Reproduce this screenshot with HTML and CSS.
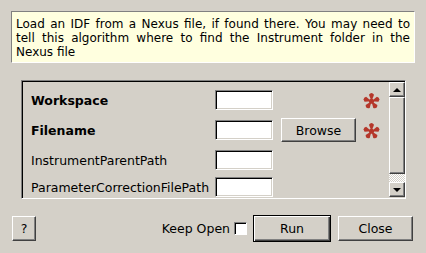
FILE: index.html
```html
<!DOCTYPE html>
<html lang="en">
<head>
  <meta charset="UTF-8">
  <title>LoadIDFFromNexus</title>
  <link rel="stylesheet" href="styles.css">
</head>
<body>
  <div class="dialog">
    <div class="description">Load an IDF from a Nexus file, if found there. You may need to tell this algorithm where to find the Instrument folder in the Nexus file</div>

    <div class="panel">
      <div class="props">
        <div class="row">
          <span class="name bold">Workspace</span>
          <span class="field"></span>
          <span class="browse-slot"></span>
          <svg class="req" viewBox="0 0 16 16" aria-label="required">
            <circle cx="8" cy="8.7" r="2.4"/>
            <path d="M8 8.7 L5.6 2.6 Q8 -0.6 10.4 2.6 Z"/>
            <path d="M8 8.7 L5.6 2.6 Q8 -0.6 10.4 2.6 Z" transform="rotate(72 8 8.7)"/>
            <path d="M8 8.7 L5.6 2.6 Q8 -0.6 10.4 2.6 Z" transform="rotate(144 8 8.7)"/>
            <path d="M8 8.7 L5.6 2.6 Q8 -0.6 10.4 2.6 Z" transform="rotate(216 8 8.7)"/>
            <path d="M8 8.7 L5.6 2.6 Q8 -0.6 10.4 2.6 Z" transform="rotate(288 8 8.7)"/>
          </svg>
        </div>
        <div class="row">
          <span class="name bold">Filename</span>
          <span class="field"></span>
          <span class="browse-slot"><button class="btn browse">Browse</button></span>
          <svg class="req" viewBox="0 0 16 16" aria-label="required">
            <circle cx="8" cy="8.7" r="2.4"/>
            <path d="M8 8.7 L5.6 2.6 Q8 -0.6 10.4 2.6 Z"/>
            <path d="M8 8.7 L5.6 2.6 Q8 -0.6 10.4 2.6 Z" transform="rotate(72 8 8.7)"/>
            <path d="M8 8.7 L5.6 2.6 Q8 -0.6 10.4 2.6 Z" transform="rotate(144 8 8.7)"/>
            <path d="M8 8.7 L5.6 2.6 Q8 -0.6 10.4 2.6 Z" transform="rotate(216 8 8.7)"/>
            <path d="M8 8.7 L5.6 2.6 Q8 -0.6 10.4 2.6 Z" transform="rotate(288 8 8.7)"/>
          </svg>
        </div>
        <div class="row">
          <span class="name">InstrumentParentPath</span>
          <span class="field"></span>
        </div>
        <div class="row last">
          <span class="name">ParameterCorrectionFilePath</span>
          <span class="field"></span>
        </div>
      </div>
      <div class="scrollbar">
        <div class="arrow up"></div>
        <div class="thumb"></div>
        <div class="trough"></div>
        <div class="arrow down"></div>
      </div>
    </div>

    <div class="footer">
      <button class="btn help">?</button>
      <span class="spacer"></span>
      <label class="keep">Keep Open <span class="check"></span></label>
      <button class="btn run">Run</button>
      <button class="btn close">Close</button>
    </div>
  </div>
</body>
</html>
```

FILE: styles.css
```css
body {
  margin: 0;
  background: #d4d0c8;
  font-family: "DejaVu Sans", sans-serif;
  font-size: 12.5px;
  color: #000;
}
.dialog {
  width: 426px;
  height: 253px;
  padding-top: 11px;
  box-sizing: border-box;
}
.description {
  margin: 0 11px;
  height: 52px;
  box-sizing: border-box;
  padding: 5px 4px 3px 4px;
  font-size: 12px;
  line-height: 14px;
  text-align: justify;
  background: #ffffdf;
  border: 1px solid;
  border-color: #808080 #fff #fff #808080;
}
.panel {
  display: flex;
  margin: 17px 0 0 21px;
  width: 385px;
  height: 119px;
  box-sizing: border-box;
  border: 1px solid;
  border-color: #808080 #fff #fff #808080;
  box-shadow: inset 1px 1px 0 #000;
  padding: 1px 0 1px 1px;
  overflow: hidden;
}
.props {
  flex: 1;
  padding: 6px 0 0 8px;
  display: flex;
  flex-direction: column;
  gap: 6px;
}
.row {
  display: flex;
  align-items: center;
  height: 24px;
  flex-shrink: 0;
}
.row.last {
  margin-top: -3px;
}
.name {
  width: 184px;
}
.bold {
  font-weight: bold;
}
.field {
  width: 58px;
  height: 20px;
  box-sizing: border-box;
  background: #fff;
  border: 1px solid;
  border-color: #808080 #fff #fff #808080;
  box-shadow: inset 1px 1px 0 #000, inset -1px -1px 0 #d4d0c8;
}
.browse-slot {
  width: 75px;
  margin-left: 8px;
  display: flex;
}
.req {
  margin-left: 7px;
  width: 17px;
  height: 17px;
  fill: #b5372b;
}
.btn {
  font-family: "DejaVu Sans", sans-serif;
  font-size: 12.5px;
  color: #000;
  background: #d4d0c8;
  border: 1px solid;
  border-color: #fff #404040 #404040 #fff;
  box-shadow: inset -1px -1px 0 #808080;
  padding: 0;
  margin: 0;
}
.browse {
  width: 75px;
  height: 24px;
}
.scrollbar {
  width: 16px;
  display: flex;
  flex-direction: column;
}
.arrow {
  height: 15px;
  box-sizing: border-box;
  border: 1px solid;
  border-color: #fff #404040 #404040 #fff;
  box-shadow: inset -1px -1px 0 #808080;
  display: flex;
  align-items: center;
  justify-content: center;
}
.arrow::after {
  content: "";
  border-left: 4px solid transparent;
  border-right: 4px solid transparent;
}
.up::after {
  border-bottom: 4px solid #000;
}
.down::after {
  border-top: 4px solid #000;
}
.thumb {
  height: 77px;
  box-sizing: border-box;
  border: 1px solid;
  border-color: #fff #404040 #404040 #fff;
  box-shadow: inset -1px -1px 0 #808080;
}
.trough {
  flex: 1;
  background-color: #e8e6e2;
  background-image: repeating-conic-gradient(#d4d0c8 0 25%, #fff 0 50%);
  background-size: 2px 2px;
}
.footer {
  display: flex;
  align-items: center;
  margin-top: 16px;
  padding: 0 13px 0 12px;
  height: 27px;
}
.help {
  width: 24px;
  height: 25px;
}
.spacer {
  flex: 1;
}
.keep {
  display: flex;
  align-items: center;
  gap: 4px;
}
.check {
  width: 13px;
  height: 13px;
  box-sizing: border-box;
  background: #fff;
  border: 1px solid;
  border-color: #808080 #fff #fff #808080;
  box-shadow: inset 1px 1px 0 #000;
}
.run {
  margin-left: 6px;
  width: 78px;
  height: 27px;
  border: 1px solid #000;
  box-shadow: inset 1px 1px 0 #fff, inset -1px -1px 0 #404040, inset -2px -2px 0 #808080;
}
.close {
  margin-left: 7px;
  width: 75px;
  height: 25px;
}
```
